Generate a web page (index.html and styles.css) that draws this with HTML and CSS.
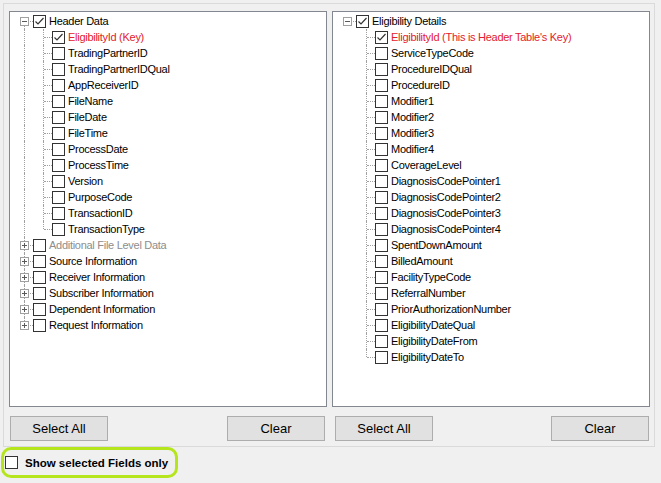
FILE: index.html
```html
<!DOCTYPE html>
<html lang="en">
<head>
    <meta charset="UTF-8">
    <title>Field Selection</title>
    <link rel="stylesheet" href="styles.css">
</head>
<body>
    <div class="panel">
        <div class="column">
            <div class="tree">
                <div class="node"><span class="g top"><i class="exp minus"></i></span><span class="cb on"><svg viewBox="0 0 11 11"><polyline points="1.5,5.5 4,8 9.5,2"/></svg></span><span class="label">Header Data</span></div>
                <div class="node"><span class="g pipe"></span><span class="g tee"></span><span class="cb on"><svg viewBox="0 0 11 11"><polyline points="1.5,5.5 4,8 9.5,2"/></svg></span><span class="label key">EligibilityId (Key)</span></div>
                <div class="node"><span class="g pipe"></span><span class="g tee"></span><span class="cb"></span><span class="label">TradingPartnerID</span></div>
                <div class="node"><span class="g pipe"></span><span class="g tee"></span><span class="cb"></span><span class="label">TradingPartnerIDQual</span></div>
                <div class="node"><span class="g pipe"></span><span class="g tee"></span><span class="cb"></span><span class="label">AppReceiverID</span></div>
                <div class="node"><span class="g pipe"></span><span class="g tee"></span><span class="cb"></span><span class="label">FileName</span></div>
                <div class="node"><span class="g pipe"></span><span class="g tee"></span><span class="cb"></span><span class="label">FileDate</span></div>
                <div class="node"><span class="g pipe"></span><span class="g tee"></span><span class="cb"></span><span class="label">FileTime</span></div>
                <div class="node"><span class="g pipe"></span><span class="g tee"></span><span class="cb"></span><span class="label">ProcessDate</span></div>
                <div class="node"><span class="g pipe"></span><span class="g tee"></span><span class="cb"></span><span class="label">ProcessTime</span></div>
                <div class="node"><span class="g pipe"></span><span class="g tee"></span><span class="cb"></span><span class="label">Version</span></div>
                <div class="node"><span class="g pipe"></span><span class="g tee"></span><span class="cb"></span><span class="label">PurposeCode</span></div>
                <div class="node"><span class="g pipe"></span><span class="g tee"></span><span class="cb"></span><span class="label">TransactionID</span></div>
                <div class="node"><span class="g pipe"></span><span class="g end"></span><span class="cb"></span><span class="label">TransactionType</span></div>
                <div class="node"><span class="g tee"><i class="exp plus"></i></span><span class="cb"></span><span class="label muted">Additional File Level Data</span></div>
                <div class="node"><span class="g tee"><i class="exp plus"></i></span><span class="cb"></span><span class="label">Source Information</span></div>
                <div class="node"><span class="g tee"><i class="exp plus"></i></span><span class="cb"></span><span class="label">Receiver Information</span></div>
                <div class="node"><span class="g tee"><i class="exp plus"></i></span><span class="cb"></span><span class="label">Subscriber Information</span></div>
                <div class="node"><span class="g tee"><i class="exp plus"></i></span><span class="cb"></span><span class="label">Dependent Information</span></div>
                <div class="node"><span class="g end"><i class="exp plus"></i></span><span class="cb"></span><span class="label">Request Information</span></div>
            </div>
            <div class="buttons left">
                <button class="btn">Select All</button>
                <button class="btn">Clear</button>
            </div>
        </div>

        <div class="column">
            <div class="tree">
                <div class="node"><span class="g solo"><i class="exp minus"></i></span><span class="cb on"><svg viewBox="0 0 11 11"><polyline points="1.5,5.5 4,8 9.5,2"/></svg></span><span class="label">Eligibility Details</span></div>
                <div class="node"><span class="g"></span><span class="g tee"></span><span class="cb on"><svg viewBox="0 0 11 11"><polyline points="1.5,5.5 4,8 9.5,2"/></svg></span><span class="label key">EligibilityId (This is Header Table's Key)</span></div>
                <div class="node"><span class="g"></span><span class="g tee"></span><span class="cb"></span><span class="label">ServiceTypeCode</span></div>
                <div class="node"><span class="g"></span><span class="g tee"></span><span class="cb"></span><span class="label">ProcedureIDQual</span></div>
                <div class="node"><span class="g"></span><span class="g tee"></span><span class="cb"></span><span class="label">ProcedureID</span></div>
                <div class="node"><span class="g"></span><span class="g tee"></span><span class="cb"></span><span class="label">Modifier1</span></div>
                <div class="node"><span class="g"></span><span class="g tee"></span><span class="cb"></span><span class="label">Modifier2</span></div>
                <div class="node"><span class="g"></span><span class="g tee"></span><span class="cb"></span><span class="label">Modifier3</span></div>
                <div class="node"><span class="g"></span><span class="g tee"></span><span class="cb"></span><span class="label">Modifier4</span></div>
                <div class="node"><span class="g"></span><span class="g tee"></span><span class="cb"></span><span class="label">CoverageLevel</span></div>
                <div class="node"><span class="g"></span><span class="g tee"></span><span class="cb"></span><span class="label">DiagnosisCodePointer1</span></div>
                <div class="node"><span class="g"></span><span class="g tee"></span><span class="cb"></span><span class="label">DiagnosisCodePointer2</span></div>
                <div class="node"><span class="g"></span><span class="g tee"></span><span class="cb"></span><span class="label">DiagnosisCodePointer3</span></div>
                <div class="node"><span class="g"></span><span class="g tee"></span><span class="cb"></span><span class="label">DiagnosisCodePointer4</span></div>
                <div class="node"><span class="g"></span><span class="g tee"></span><span class="cb"></span><span class="label">SpentDownAmount</span></div>
                <div class="node"><span class="g"></span><span class="g tee"></span><span class="cb"></span><span class="label">BilledAmount</span></div>
                <div class="node"><span class="g"></span><span class="g tee"></span><span class="cb"></span><span class="label">FacilityTypeCode</span></div>
                <div class="node"><span class="g"></span><span class="g tee"></span><span class="cb"></span><span class="label">ReferralNumber</span></div>
                <div class="node"><span class="g"></span><span class="g tee"></span><span class="cb"></span><span class="label">PriorAuthorizationNumber</span></div>
                <div class="node"><span class="g"></span><span class="g tee"></span><span class="cb"></span><span class="label">EligibilityDateQual</span></div>
                <div class="node"><span class="g"></span><span class="g tee"></span><span class="cb"></span><span class="label">EligibilityDateFrom</span></div>
                <div class="node"><span class="g"></span><span class="g end"></span><span class="cb"></span><span class="label">EligibilityDateTo</span></div>
            </div>
            <div class="buttons right">
                <button class="btn">Select All</button>
                <button class="btn">Clear</button>
            </div>
        </div>
    </div>

    <div class="footer">
        <label class="highlight">
            <span class="cb"></span>
            <span class="footer-label">Show selected Fields only</span>
        </label>
    </div>
</body>
</html>
```

FILE: styles.css
```css
body {
    margin: 0;
    background: #f0f0f0;
    font-family: "Liberation Sans", Arial, sans-serif;
    color: #000;
}
.panel {
    display: flex;
    gap: 5px;
    width: 652px;
    height: 444px;
    box-sizing: border-box;
    margin: 3px 0 0 3px;
    padding: 7px 4px 5px 5px;
    border: 1px solid #dadada;
}
.column {
    width: 318px;
}
.tree {
    height: 396px;
    box-sizing: border-box;
    padding: 1px 0 0 4px;
    background: #fff;
    border: 1px solid #828790;
    font-size: 11px;
    letter-spacing: -0.28px;
}
.node {
    display: flex;
    align-items: center;
    height: 16px;
}
.g {
    position: relative;
    flex: none;
    width: 19px;
    height: 16px;
}
.tee::before,
.pipe::before,
.end::before,
.top::before {
    content: "";
    position: absolute;
    left: 10px;
    top: 0;
    bottom: 0;
    border-left: 1px dotted #a0a0a0;
}
.end::before { bottom: 8px; }
.top::before { top: 8px; }
.tee::after,
.end::after,
.top::after,
.solo::after {
    content: "";
    position: absolute;
    left: 11px;
    right: 0;
    top: 8px;
    border-top: 1px dotted #a0a0a0;
}
.exp {
    position: absolute;
    left: 6px;
    top: 4px;
    z-index: 1;
    width: 9px;
    height: 9px;
    box-sizing: border-box;
    border: 1px solid #a0a0a0;
    background: #fff;
}
.exp::before,
.plus::after {
    content: "";
    position: absolute;
    background: #5a5a5a;
}
.exp::before { left: 1px; top: 3px; width: 5px; height: 1px; }
.plus::after { left: 3px; top: 1px; width: 1px; height: 5px; }
.cb {
    display: inline-block;
    flex: none;
    width: 13px;
    height: 13px;
    box-sizing: border-box;
    border: 1px solid #333;
    background: #fff;
}
.cb svg {
    display: block;
    width: 11px;
    height: 11px;
    fill: none;
    stroke: #333;
    stroke-width: 1.2;
}
.label {
    margin-left: 3px;
    line-height: 16px;
    white-space: nowrap;
}
.key { color: #e4202b; }
.muted { color: #8d8d8d; }
.buttons {
    display: flex;
    justify-content: space-between;
    margin-top: 9px;
}
.buttons.left { padding: 0 2px 0 1px; }
.buttons.right { padding: 0 1px 0 3px; }
.btn {
    width: 98px;
    height: 25px;
    padding: 0;
    border: 1px solid #adadad;
    background: #e1e1e1;
    font-family: "Liberation Sans", Arial, sans-serif;
    font-size: 13px;
    color: #000;
}
.highlight {
    display: inline-flex;
    align-items: center;
    gap: 7px;
    height: 31px;
    box-sizing: border-box;
    margin-left: 1px;
    padding: 0 7px 0 1px;
    border: 3px solid #b5e61d;
    border-radius: 10px;
}
.footer-label {
    font-size: 11.5px;
    font-weight: bold;
}
```
